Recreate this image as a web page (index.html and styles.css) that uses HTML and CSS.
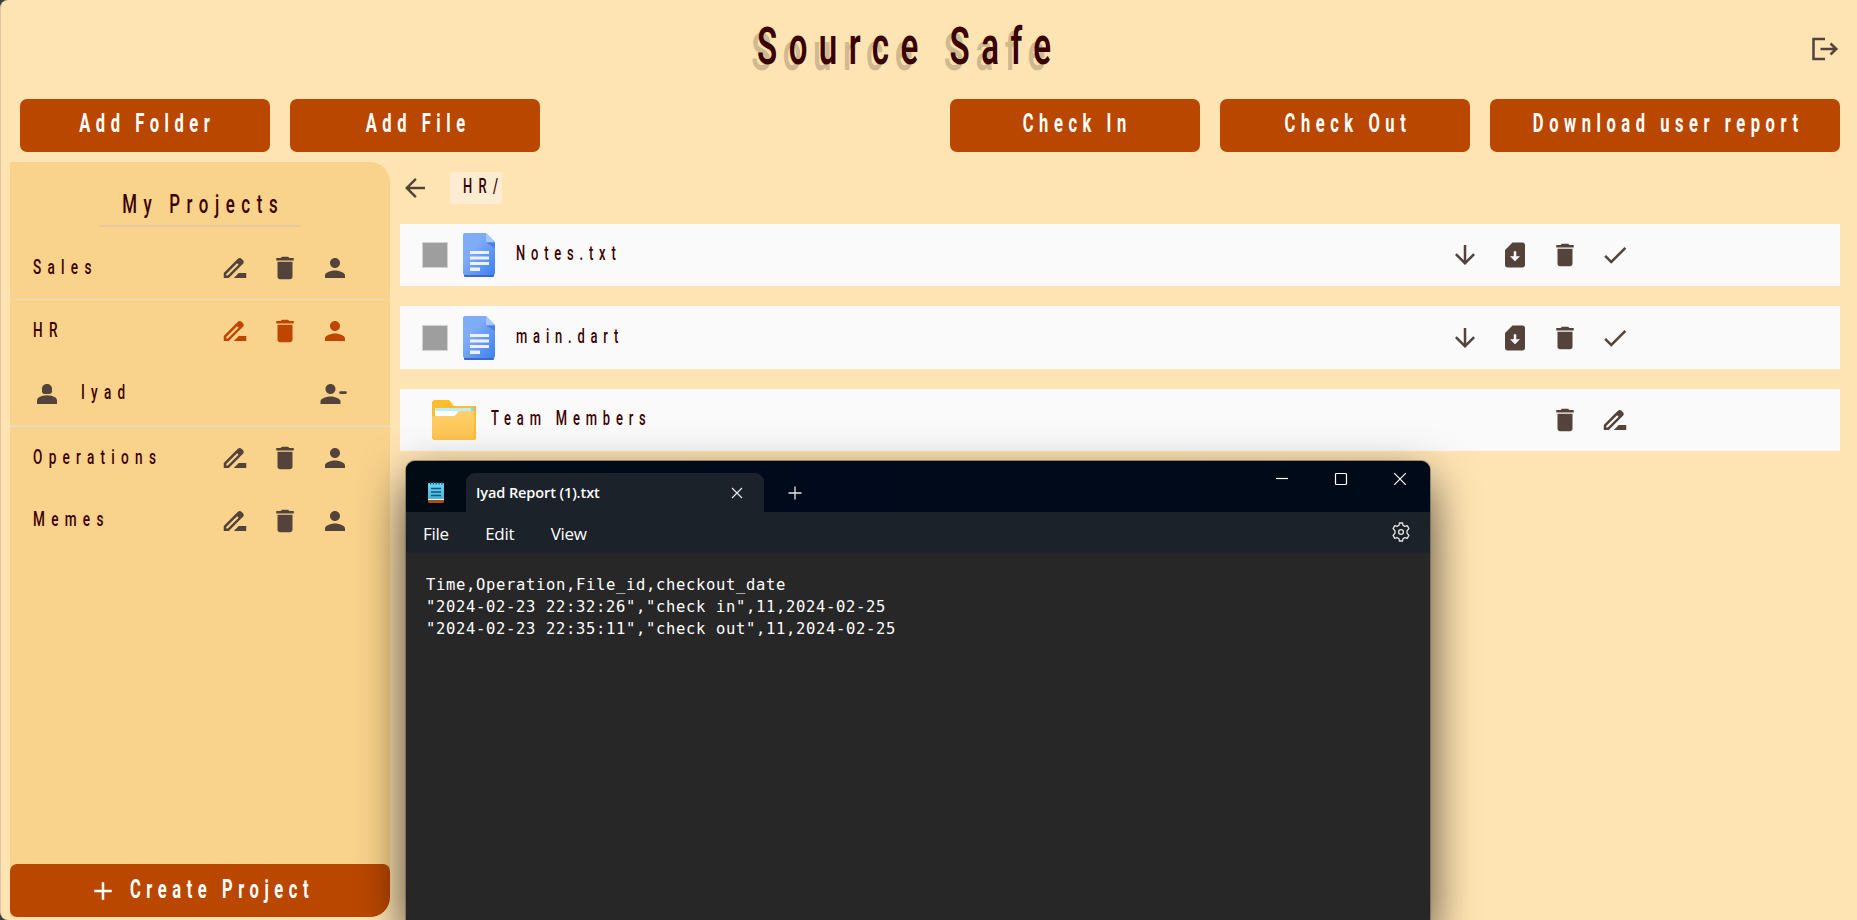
FILE: index.html
```html
<!DOCTYPE html>
<html lang="en">
<head>
<meta charset="utf-8">
<title>Source Safe</title>
<link rel="stylesheet" href="styles.css">
</head>
<body>
<svg class="defs" width="0" height="0">
  <symbol id="edit" viewBox="0 0 24 24"><path d="M18.41 5.8 17.2 4.59c-.78-.78-2.05-.78-2.83 0l-2.68 2.68L3 15.96V20h4.04l8.74-8.74 2.63-2.63c.79-.78.79-2.05 0-2.83zM6.21 18H5v-1.21l8.66-8.66 1.21 1.21L6.21 18zM11 20l4-4h6v4H11z"/></symbol>
  <symbol id="trash" viewBox="0 0 24 24"><path d="M6 19c0 1.1.9 2 2 2h8c1.1 0 2-.9 2-2V7H6v12zM19 4h-3.5l-1-1h-5l-1 1H5v2h14V4z"/></symbol>
  <symbol id="person" viewBox="0 0 24 24"><path d="M12 12c2.21 0 4-1.79 4-4s-1.79-4-4-4-4 1.79-4 4 1.79 4 4 4zm0 2c-2.67 0-8 1.34-8 4v2h16v-2c0-2.66-5.33-4-8-4z"/></symbol>
  <symbol id="member" viewBox="0 0 24 24"><path d="M18.39 14.56C16.71 13.7 14.53 13 12 13s-4.71.7-6.39 1.56A2.97 2.97 0 0 0 4 17.22V20h16v-2.78c0-1.12-.61-2.15-1.61-2.66zM10 12h4c1.1 0 2-.9 2-2V7.5C16 5.5 14.2 4 12 4S8 5.500 8 7.500V10c0 1.100.9 2 2 2z"/></symbol>
  <symbol id="remove" viewBox="0 0 24 24"><path d="M14 8c0-2.210-1.790-4-4-4S6 5.790 6 8s1.790 4 4 4 4-1.790 4-4zM2 18v2h16v-2c0-2.660-5.330-4-8-4s-8 1.340-8 4zM18 9.700h4a.9.9 0 0 1 0 2.200h-4a.9.9 0 0 1 0-2.200z"/></symbol>
  <symbol id="back" viewBox="0 0 24 24"><path d="M20 11H7.830l5.590-5.590L12 4l-8 8 8 8 1.410-1.410L7.830 13H20v-2z"/></symbol>
  <symbol id="down" viewBox="0 0 24 24"><path d="m20 12-1.410-1.410L13 16.170V4h-2v12.170l-5.580-5.590L4 12l8 8 8-8z"/></symbol>
  <symbol id="card" viewBox="0 0 24 24"><path d="M18 2h-8L4 8v12c0 1.100.9 2 2 2h12c1.100 0 2-.9 2-2V4c0-1.100-.9-2-2-2zm-6 15-4-4h3V9h2v4h3l-4 4z"/></symbol>
  <symbol id="check" viewBox="0 0 24 24"><path d="M9 16.170 4.830 12l-1.420 1.410L9 19 21 7l-1.410-1.410L9 16.170z"/></symbol>
  <symbol id="add" viewBox="0 0 24 24"><path d="M19 13h-6v6h-2v-6H5v-2h6V5h2v6h6v2z"/></symbol>
  <symbol id="doc" viewBox="0 0 32 44">
    <path fill="#3c68c6" d="M1 40h30v3q0 1-1 1H2q-1 0-1-1z"/>
    <path fill="url(#docblue)" d="M2 0h21l9 9v31q0 2-2 2H2q-2 0-2-2V2Q0 0 2 0z"/>
    <path fill="#a8c6fa" d="M23 0l9 9.500h-9z"/>
    <path fill="#4a7fe0" d="M23 9.500h9V15z"/>
    <path fill="#eef1f3" d="M7 18h19v3H7zM7 23.500h19v3H7zM7 29h19v3H7zM7 34.500h10v3.500H7z"/>
  </symbol>
  <symbol id="folder" viewBox="0 0 44 40">
    <path fill="#ffbc2c" d="M2 0h15l5 6h22v33l-2 1H2l-2-2V2z"/>
    <path fill="#ffa940" d="M42 6h2v5h-2z"/>
    <path fill="#b8efff" d="M3 8h39v3H3z"/><path fill="#7bdcf8" d="M39 8h3v3h-3z"/>
    <path fill="#fff" d="M3 11h24l-4 5H3z"/>
    <path fill="url(#foldery)" d="M0 17l2-1h21l4-5h15v26l-1 3H2l-2-2z"/>
  </symbol>
  <linearGradient id="docblue" x1="0" y1="0" x2="1" y2="1"><stop offset=".35" stop-color="#7facf7"/><stop offset="1" stop-color="#3c80f0"/></linearGradient>
  <linearGradient id="foldery" x1="0" y1="0" x2="0" y2="1"><stop offset="0" stop-color="#ffcf6c"/><stop offset="1" stop-color="#ffc250"/></linearGradient>
</svg>

<div class="app">
  <header class="header">
    <h1 class="title cond">Source Safe</h1>
    <svg class="logout" viewBox="0 0 28 26"><path d="M14 3H2.500v20H14M9.500 13H25M19.500 7.500l5.800 5.500-5.800 5.500"/></svg>
  </header>

  <div class="toolbar">
    <button class="btn"><span class="cond">Add Folder</span></button>
    <button class="btn"><span class="cond">Add File</span></button>
    <span class="spring"></span>
    <button class="btn"><span class="cond">Check In</span></button>
    <button class="btn"><span class="cond">Check Out</span></button>
    <button class="btn wide"><span class="cond">Download user report</span></button>
  </div>

  <div class="body">
    <aside class="side">
      <h2 class="side-title"><span class="cond">My Projects</span></h2>
      <div class="project"><span class="name cond">Sales</span><svg class="ic"><use href="#edit"/></svg><svg class="ic"><use href="#trash"/></svg><svg class="ic"><use href="#person"/></svg></div>
      <div class="group">
        <div class="project active"><span class="name cond">HR</span><svg class="ic"><use href="#edit"/></svg><svg class="ic"><use href="#trash"/></svg><svg class="ic"><use href="#person"/></svg></div>
        <div class="project user"><svg class="ic"><use href="#member"/></svg><span class="name cond">Iyad</span><svg class="ic"><use href="#remove"/></svg></div>
      </div>
      <div class="project"><span class="name cond">Operations</span><svg class="ic"><use href="#edit"/></svg><svg class="ic"><use href="#trash"/></svg><svg class="ic"><use href="#person"/></svg></div>
      <div class="project"><span class="name cond">Memes</span><svg class="ic"><use href="#edit"/></svg><svg class="ic"><use href="#trash"/></svg><svg class="ic"><use href="#person"/></svg></div>
      <button class="btn create"><svg class="ic"><use href="#add"/></svg><span class="cond">Create Project</span></button>
    </aside>

    <main class="main">
      <div class="crumbs"><svg class="ic"><use href="#back"/></svg><div class="crumb"><span class="name cond">HR/</span></div></div>
      <div class="files">
        <div class="row"><span class="box"></span><svg class="doc"><use href="#doc"/></svg><span class="name cond">Notes.txt</span>
          <div class="acts"><svg class="ic"><use href="#down"/></svg><svg class="ic"><use href="#card"/></svg><svg class="ic"><use href="#trash"/></svg><svg class="ic"><use href="#check"/></svg></div></div>
        <div class="row"><span class="box"></span><svg class="doc"><use href="#doc"/></svg><span class="name cond">main.dart</span>
          <div class="acts"><svg class="ic"><use href="#down"/></svg><svg class="ic"><use href="#card"/></svg><svg class="ic"><use href="#trash"/></svg><svg class="ic"><use href="#check"/></svg></div></div>
        <div class="row"><svg class="folder"><use href="#folder"/></svg><span class="name cond">Team Members</span>
          <div class="acts"><svg class="ic"><use href="#trash"/></svg><svg class="ic"><use href="#edit"/></svg></div></div>
      </div>
    </main>
  </div>
</div>

<section class="notepad">
  <div class="tabs">
    <svg class="np" viewBox="0 0 16 21"><path fill="#a84f0c" d="M0 17h16v3l-1 1H1l-1-1z"/><path fill="#e8f2f6" d="M0 16h16v2H0z"/><path fill="url(#pad)" d="M0 2q0-1 1-1h14q1 0 1 1v15H0z"/><path stroke="#075a80" stroke-width="1.500" d="M3 6.500h10M3 10h10M3 13.500h10"/><path stroke="#0e5c7c" stroke-width="2.500" stroke-dasharray="1.300 1.500" d="M2 1.200h13"/><linearGradient id="pad" x1="0" y1="0" x2="0" y2="1"><stop offset="0" stop-color="#72d6f2"/><stop offset="1" stop-color="#48b4d8"/></linearGradient></svg>
    <div class="tab"><span>Iyad Report (1).txt</span><svg class="x" viewBox="0 0 12 12"><path d="M1 1l10 10M11 1 1 11"/></svg></div>
    <svg class="plus" viewBox="0 0 14 14"><path d="M.5 7h13M7 .5v13"/></svg>
    <div class="winbtns">
      <svg viewBox="0 0 14 14"><path d="M1 6.500h12"/></svg>
      <svg viewBox="0 0 14 14"><rect x="1.500" y="1.500" width="11" height="11" rx="1"/></svg>
      <svg viewBox="0 0 14 14"><path d="M1.200 1.200l11.600 11.600M12.800 1.200 1.200 12.800"/></svg>
    </div>
  </div>
  <div class="menu"><span>File</span><span>Edit</span><span>View</span>
    <svg class="gear" viewBox="0 0 20 20"><path d="M8 3.300 8.400 1h3.200l.4 2.300 1.900 1.100 2.300-.8 1.700 2.900L16 8.800v2.400l1.900 2.300-1.700 2.900-2.300-.8-1.900 1.100-.4 2.300H8.400L8 16.700l-1.900-1.100-2.300.8-1.700-2.900L4 11.200V8.800L2.100 6.500l1.700-2.900 2.300.8z"/><circle cx="10" cy="10" r="2.400"/></svg>
  </div>
  <pre class="text">Time,Operation,File_id,checkout_date
"2024-02-23 22:32:26","check in",11,2024-02-25
"2024-02-23 22:35:11","check out",11,2024-02-25</pre>
</section>
</body>
</html>
```
FILE: styles.css
```css
* { box-sizing: border-box; }
body { margin: 0; height: 920px; overflow: hidden; background: #3a3a3e; font-family: Roboto, "Liberation Sans", sans-serif; position: relative; }
.defs { position: absolute; }
svg { display: block; flex: none; }
.app { height: 920px; background: #ffe4b3; border-left: 1px solid #dcc6a0; border-radius: 8px 0 0 8px; padding: 0 17px 3px 9px; display: flex; flex-direction: column; }

/* Condensed lettering */
.cond { display: inline-block; white-space: nowrap; transform: scaleX(.647); color: #3b0000; }
.ic { width: 30px; height: 30px; fill: #53433a; }

.header { height: 99px; display: flex; justify-content: space-between; padding-left: 747px; }
.title { margin: 0; width: 300px; height: 94px; line-height: 94px; font-size: 51px; font-weight: 600; letter-spacing: 17.800px; transform-origin: left; text-shadow: -9px 6px 0 rgba(0,0,0,.2); }
.logout { width: 28px; height: 26px; margin: 36px 1px 0 0; fill: none; stroke: #53433a; stroke-width: 2.500; }

.toolbar { display: flex; gap: 20px; height: 63px; padding-left: 10px; flex: none; }
.spring { flex: 1; }
.btn { width: 250px; height: 52.500px; flex: none; padding: 0 0 4px; border: 0; border-radius: 7px; background: #b94700; display: flex; align-items: center; justify-content: center; font: 700 25.500px Roboto, sans-serif; }
.btn .cond { color: #fff; letter-spacing: 8.600px; margin: 0 -6.500px 0 -1px; }
.wide { width: 350px; }
.toolbar .spring { margin: 0 -20px; }

.body { display: flex; flex: 1; gap: 10px; min-height: 0; }
.side { width: 380px; background: #f9d38c; border-radius: 0 20px 20px 0; display: flex; flex-direction: column; }
.side-title { margin: 0 0 10px 89px; width: 202px; height: 65px; padding-top: 22px; border-bottom: 2px solid #e4cba4; line-height: 40px; font-size: 26px; font-weight: 500; display: flex; justify-content: center; }
.side-title .cond { letter-spacing: 10.200px; margin: 0 -8.200px 0 -2px; }
.name { font-size: 21px; font-weight: 500; line-height: 30px; letter-spacing: 9.700px; transform-origin: left; }
.project { height: 62px; display: flex; align-items: center; gap: 20px; padding: 0 40px 0 22.500px; }
.project .name { flex: 1 1 0; min-width: 0; margin-top: -3px; }
.active .ic { fill: #bf4600; }
.group { border: solid #e8dabb; border-width: 1px 0 2px; height: 128px; }
.group ~ .project { height: 62.500px; }
.user { padding: 0 42.500px 0 22px; height: 63px; }
.user .name { margin-left: -1px; }
.create { width: 380px; height: 53px; margin-top: auto; border-radius: 7px 7px 20px 7px; justify-content: flex-start; padding-left: 78px; gap: 20px; }
.create .ic { fill: #fff; margin-top: 5px; }
.create .cond { transform-origin: left; margin: 0 0 0 -8px; }

.main { flex: 1; min-width: 0; }
.crumbs { height: 62px; display: flex; align-items: flex-start; gap: 20px; padding-top: 10px; }
.crumbs .ic { margin-top: 1px; }
.crumb { width: 52px; height: 32px; background: #fcecd2; padding: 0 0 0 13px; }
.crumb .name { font-size: 20px; line-height: 29px; }
.files { display: flex; flex-direction: column; gap: 20px; }
.row { height: 62.400px; background: #fafafa; display: flex; align-items: center; padding-left: 22px; }
.row .name { font-size: 20px; letter-spacing: 9px; margin: -4px 0 0 21px; width: 300px; }
.box { width: 26px; height: 26px; background: #9e9e9e; border: 1px solid #d2d2d2; }
.doc { width: 32px; height: 44px; margin-left: 15px; }
.folder { width: 44px; height: 40px; margin-left: 10px; }
.row .folder + .name { margin-left: 15px; }
.acts { margin-left: auto; margin-right: 210px; display: flex; gap: 20px; }

/* Floating editor window */
.notepad { position: absolute; left: 406px; top: 461px; width: 1024px; height: 459px; background: #272727; border-radius: 9px 9px 0 0; color: #fff; font-family: "Open Sans", "Noto Sans", sans-serif; box-shadow: 0 0 0 1px rgba(90,80,65,.5), 0 18px 46px rgba(0,0,0,.68), 0 60px 46px rgba(0,0,0,.1); }
.tabs { height: 51px; background: linear-gradient(90deg, #000b14, #000a1c 40%, #000a18); border-radius: 9px 9px 0 0; display: flex; }
.np { width: 16px; height: 21px; margin: 20.500px 22px 0 22px; }
.tab { width: 298px; height: 39px; margin-top: 12px; padding: 0 21px 0 10px; background: #1c2229; border-radius: 9px 9px 0 0; display: flex; align-items: center; justify-content: space-between; font-size: 14.500px; font-weight: 600; letter-spacing: -.1px; }
.x { width: 12px; height: 12px; fill: none; stroke: #e8e8e8; stroke-width: 1.200; }
.plus { width: 14px; height: 14px; margin: 25px 0 0 23.500px; stroke: #e8e8e8; stroke-width: 1.300; }
.winbtns { display: flex; gap: 45px; margin: 11px 23px 0 auto; }
.winbtns svg { width: 14px; height: 14px; fill: none; stroke: #fff; stroke-width: 1.200; }
.menu { height: 41px; background: #1c2229; border-bottom: 1px solid #20242a; display: flex; align-items: center; padding: 2px 19px 0 17px; gap: 36px; font-size: 17px; letter-spacing: -.3px; }
.menu span + span { margin-left: .500px; }
.gear { width: 20px; height: 20px; margin: -2px 0 0 auto; fill: none; stroke: #e6e6e6; stroke-width: 1.300; stroke-linejoin: round; }
.text { margin: 0; padding: 21px 20px; font: 15.500px/22px "DejaVu Sans Mono", monospace; letter-spacing: .67px; }
```
